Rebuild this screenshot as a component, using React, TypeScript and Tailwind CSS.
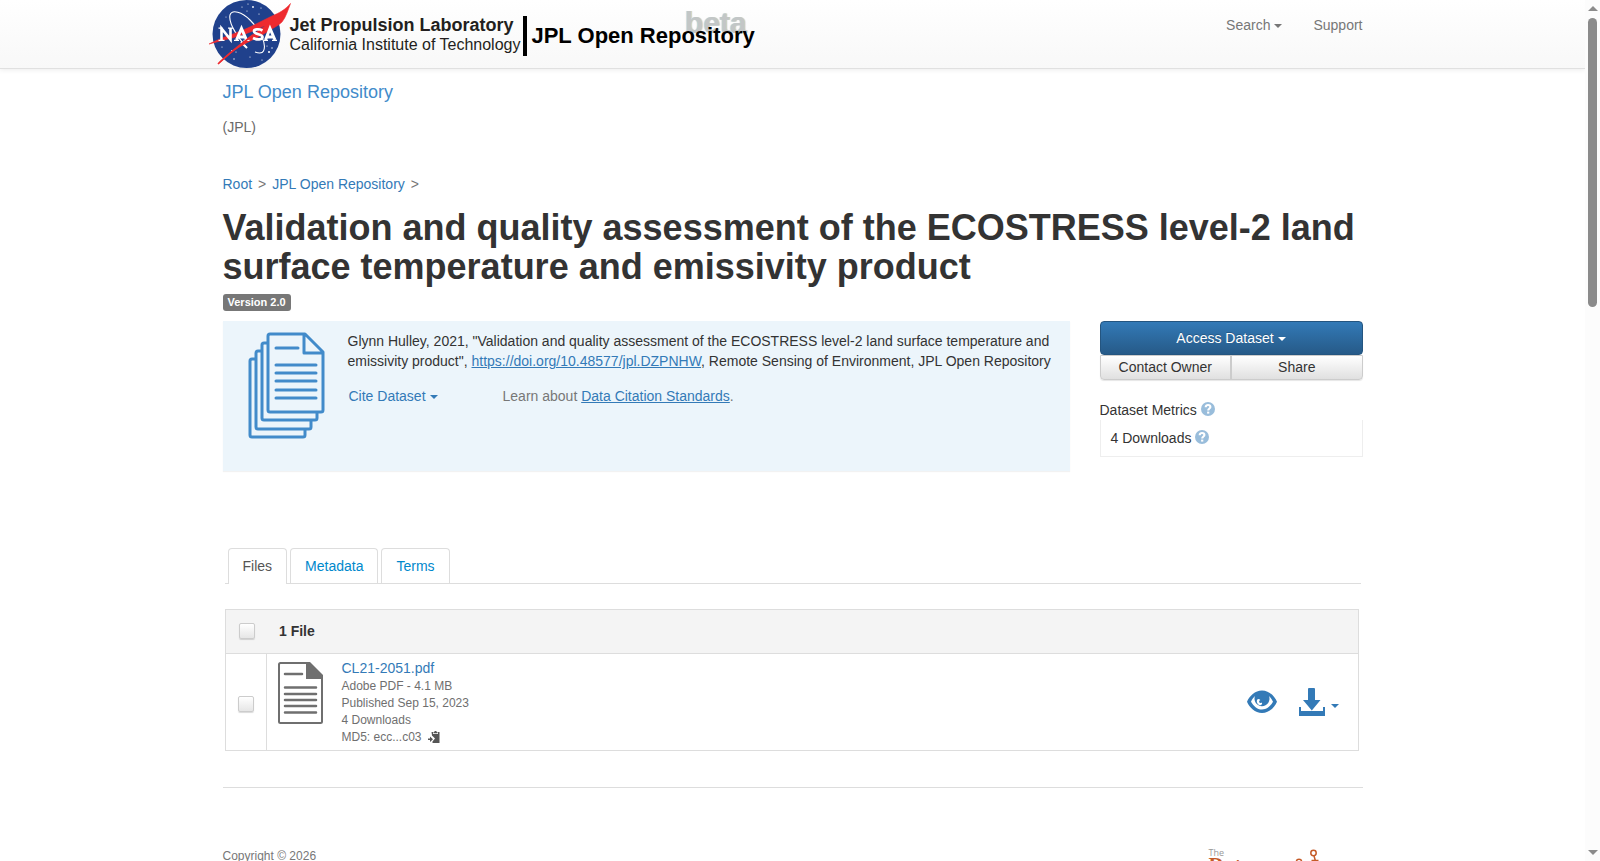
import type { ReactNode } from "react";

function Caret() {
  return (
    <span
      aria-hidden="true"
      className="ml-1 inline-block border-x-4 border-t-4 border-x-transparent border-t-current align-middle"
    />
  );
}

function NasaLogo() {
  return (
    <svg width="84" height="69" viewBox="0 0 84 69" aria-label="NASA" role="img" className="shrink-0">
      <circle cx="38.500" cy="34" r="34" fill="#20418c" />
      <g fill="#fff">
        <circle cx="34" cy="7" r="0.600" />
        <circle cx="40" cy="4" r="0.600" />
        <circle cx="45" cy="7" r="0.900" />
        <circle cx="53" cy="8" r="0.600" />
        <circle cx="39" cy="11" r="0.600" />
        <circle cx="51" cy="14" r="0.600" />
        <circle cx="18" cy="17" r="0.500" />
        <circle cx="24" cy="51" r="1" />
        <circle cx="28" cy="52" r="0.600" />
        <circle cx="26" cy="59" r="0.700" />
        <circle cx="42" cy="57" r="0.600" />
        <circle cx="54" cy="60" r="0.600" />
        <circle cx="61" cy="52" r="1" />
        <circle cx="64" cy="48" r="0.700" />
        <circle cx="59" cy="46" r="0.600" />
        <circle cx="14" cy="47" r="0.600" />
      </g>
      <path
        d="M39 48C32 40 20 24 22 15C24 9 34 12 42 20C52 30 59 44 55.500 51C54 54 50 53 47 52"
        fill="none"
        stroke="#fff"
        strokeWidth="1.100"
      />
      <path d="M33 42l6 6" stroke="#fff" strokeWidth="2" />
      <path
        d="M82.500 3.500C77 10 71 13 64 16C58 19 52 22 46 25C38 29 28 33 22 35C14 38 7 41 1 44C9 42 16 40 24 38C32 36 40 33 47.500 30C52 28 55 26 57 26C50 31 40 38 32 45C24 51 16 58 10 64C15 60 20 55 26 50.500C38 42 50 38 59 32C65 28 70 26 74 22C78 17 80 10 82.500 3.500Z"
        fill="#ee2a2f"
        stroke="#ee2a2f"
        strokeWidth="0.600"
      />
      <g fill="none" stroke="#fff" strokeWidth="3">
        <path d="M13.500 40V28.500l9 11V28" strokeWidth="2.600" />
        <path d="M28.500 40l5-11.500 5 11.500M30 37h7" />
        <path d="M54.500 30.500c-3.500-2-8.500-1.500-8.500 0.800 0 3.500 8.500 2.500 8.500 5.700 0 3-5.500 3-9.500 1" strokeWidth="2.700" />
        <path d="M57.500 40l4.500-11.500 5 11.500M59 37h6" />
      </g>
      <path d="M10.500 40.300h6M10.500 28.200h4M20 28.200h5M26 40.300h5M35.500 40.300h6M55.500 40.300h4.500M64 40.300h5" stroke="#fff" strokeWidth="1.200" />
      <path d="M10 64C20 54 32 45 45 35" stroke="#ee2a2f" strokeWidth="1.600" fill="none" />
    </svg>
  );
}

function Header() {
  return (
    <header className="h-[69px] border-b border-[#e0e0e0] bg-linear-to-b from-white to-[#f8f8f8] shadow-[0_1px_5px_rgba(0,0,0,0.08)]">
      <div className="mx-auto flex w-[1140px] max-w-full items-start justify-between">
        <a href="#" className="-ml-[15px] flex items-start text-black">
          <NasaLogo />
          <span className="-ml-0.5 mt-[15px] flex flex-col whitespace-nowrap text-[#231f20]">
            <span className="text-[18px]/[20px] font-bold">Jet Propulsion Laboratory</span>
            <span className="text-[16px]/[20px]">California Institute of Technology</span>
          </span>
          <span className="ml-[3px] mt-4 h-10 w-1 bg-black" />
          <span className="relative ml-1 mt-6 whitespace-nowrap text-[22px]/[24px] font-bold">
            <span className="absolute -top-[18px] right-2 text-[30px]/[34px] text-[#c3c6c6] [text-shadow:-1px_0_#c0dcea,1px_0_#eedfc4]">
              beta
            </span>
            <span className="relative">JPL Open Repository</span>
          </span>
        </a>
        <nav className="mt-[15px] flex gap-[31px] text-[#777]">
          <button type="button">
            Search
            <Caret />
          </button>
          <a href="#">Support</a>
        </nav>
      </div>
    </header>
  );
}

function DatasetIcon() {
  return (
    <svg
      width="78"
      height="108"
      viewBox="0 -1 78 108"
      fill="none"
      stroke="#428bca"
      strokeWidth="3"
      strokeLinejoin="round"
      className="shrink-0"
    >
      <path d="M8 27H4a2 2 0 0 0-2 2v74a2 2 0 0 0 2 2h51a2 2 0 0 0 2-2v-6" />
      <path d="M14 19h-4a2 2 0 0 0-2 2v74a2 2 0 0 0 2 2h51a2 2 0 0 0 2-2v-6" />
      <path d="M20 11h-4a2 2 0 0 0-2 2v73a2 2 0 0 0 2 2h51a2 2 0 0 0 2-2v-6" />
      <path d="M57 2H22a2 2 0 0 0-2 2v74a2 2 0 0 0 2 2h51a2 2 0 0 0 2-2V20z M56 2v19h19" />
      <path d="M28 16h22M28 33h40M28 41h40M28 49h40M28 58h40M28 66h40" strokeLinecap="round" />
    </svg>
  );
}

function FileIcon() {
  return (
    <svg width="46" height="62" viewBox="0 0 46 62" fill="none" stroke="#6f6f6f" strokeWidth="2">
      <path d="M29 1H2.500A1.500 1.500 0 0 0 1 2.500v57A1.500 1.500 0 0 0 2.500 61h40a1.500 1.500 0 0 0 1.500-1.500V14" />
      <path d="M28 0h4l13 13v4H28z" fill="#6f6f6f" stroke="none" />
      <path d="M7 12h17M7 25.500h31M7 32h31M7 38h31M7 44h31M7 50.500h31" strokeWidth="2.500" strokeLinecap="round" />
    </svg>
  );
}

function EyeIcon() {
  return (
    <svg width="30" height="24" viewBox="0 0 30 24">
      <path
        fill="#337ab7"
        fillRule="evenodd"
        d="M15 0.500C22 0.500 27.500 6 30 11.700 27.500 17.500 22 23 15 23S2.500 17.500 0 11.700C2.500 6 8 0.500 15 0.500ZM4 11.700C6.500 16 10 19.500 15 19.500s8.500-3.500 11-7.800C25 9.500 23.500 7.500 22 6A7.500 7.500 0 1 1 8 6C6.500 7.500 5 9.500 4 11.700Z"
      />
      <path d="M10 10c1-2 3-1 4 1s2 3 0 4-5-2-4-5Z" fill="#fff" />
      <circle cx="13.600" cy="11.600" r="1.500" fill="#337ab7" />
    </svg>
  );
}

function DownloadIcon() {
  return (
    <svg width="26" height="28" viewBox="0 0 26 28" fill="#337ab7">
      <path d="M9 1q0-1 1-1h5q1 0 1 1v11h5.500L12.800 22.500 4 12h5zM0 19h2v4h22V19h2v9H0z" />
    </svg>
  );
}

function CopyIcon() {
  return (
    <svg width="12" height="12" viewBox="0 0 12 12" fill="#555" className="ml-1.5 inline-block align-[-2px]">
      <path d="M3.500 1H5V3h5V1h1.500v11H4.500V10.500l2.500-3L4 4.500z" />
      <path d="M5.500 2.300V1h1V0h2v1h1v1.300zM4.500 3.700h6.500v1H4.500z" />
      <path d="M0 7.500h2V5.500L5 8.300 2 11V9H0z" />
    </svg>
  );
}

function Help() {
  return (
    <svg width="14" height="14" viewBox="0 0 14 14" className="ml-1 inline-block align-[-1px]">
      <circle cx="7" cy="7" r="7" fill="#99bddb" />
      <path d="M4.700 5.300C4.700 3.600 5.700 3 7 3s2.400 0.700 2.400 2C9.400 6.600 7.200 6.500 7.200 8.600" fill="none" stroke="#fff" strokeWidth="2.100" />
      <path d="M6.100 9.600h2.200v2H6.100z" fill="#fff" />
    </svg>
  );
}

function Check({ label }: { label: string }) {
  return (
    <input
      type="checkbox"
      aria-label={label}
      className="block size-4 appearance-none rounded-[2px] border border-[#ccc] bg-linear-to-b from-white to-[#e6e6e6] shadow-[0_1px_1px_rgba(0,0,0,0.15)]"
    />
  );
}

function Tab({ active, children }: { active?: boolean; children: ReactNode }) {
  return (
    <button
      type="button"
      role="tab"
      aria-selected={!!active}
      className={
        active
          ? "-mb-px h-9 rounded-t border border-b-0 border-[#ddd] bg-white px-3.5 pb-0.5 text-[#555]"
          : "h-[35px] rounded-t border border-b-0 border-[#ddd] px-3.5 text-[#0088cc]"
      }
    >
      {children}
    </button>
  );
}

function Citation() {
  return (
    <section className="flex h-[150px] min-w-0 flex-1 bg-[#ecf5fb] pl-[25px] pt-[10px] shadow-[0_1px_1px_rgba(0,0,0,0.05)]">
      <DatasetIcon />
      <div className="ml-[22px] min-w-0 flex-1 pr-4 text-[#333]">
        <p>
          Glynn Hulley, 2021, "Validation and quality assessment of the ECOSTRESS level-2 land surface temperature and
          emissivity product",{" "}
          <a href="#" className="text-[#337ab7] underline">
            https://doi.org/10.48577/jpl.DZPNHW
          </a>
          , Remote Sensing of Environment, JPL Open Repository
        </p>
        <div className="mt-[15px] flex gap-[65px] pl-px text-[#777]">
          <button type="button" className="text-[#337ab7]">
            Cite Dataset
            <Caret />
          </button>
          <p>
            Learn about{" "}
            <a href="#" className="text-[#337ab7] underline">
              Data Citation Standards
            </a>
            .
          </p>
        </div>
      </div>
    </section>
  );
}

function Actions() {
  return (
    <aside className="w-[263px] shrink-0 text-[#333]">
      <button
        type="button"
        className="block h-[34px] w-full rounded border border-[#245580] bg-linear-to-b from-[#337ab7] to-[#265a88] text-white [text-shadow:0_-1px_0_rgba(0,0,0,0.2)]"
      >
        Access Dataset
        <Caret />
      </button>
      <div className="flex h-[25px] overflow-hidden rounded-b border border-[#ccc] bg-linear-to-b from-white to-[#e0e0e0] shadow-[0_1px_1px_rgba(0,0,0,0.1)]">
        <button type="button" className="flex-1 border-r-2 border-[#ccc] pb-0.5">
          Contact Owner
        </button>
        <button type="button" className="flex-1 pb-0.5">
          Share
        </button>
      </div>
      <h2 className="mt-5">
        Dataset Metrics
        <Help />
      </h2>
      <p className="border border-t-0 border-[#eee] px-2.5 pb-2 pt-2">
        4 Downloads
        <Help />
      </p>
    </aside>
  );
}

function Files() {
  return (
    <table className="mx-0.5 mt-[25px] w-[1134px] max-w-full border-collapse border border-[#ddd] text-left">
      <thead>
        <tr className="h-11 border-b border-[#ddd] bg-[#f4f4f4]">
          <th className="w-[41px] pb-0.5 pl-[13px]">
            <Check label="Select all files" />
          </th>
          <th colSpan={2} className="pb-0.5 pl-[13px] font-bold text-[#333]">
            1 File
          </th>
        </tr>
      </thead>
      <tbody>
        <tr className="h-[97px]">
          <td className="w-[41px] border-r border-[#ddd] pl-3 pt-1">
            <Check label="Select CL21-2051.pdf" />
          </td>
          <td className="pl-[11px] align-top">
            <div className="flex pt-1">
              <span className="pt-1">
                <FileIcon />
              </span>
              <div className="ml-[18px] text-[12px]/[17px] text-[#6f6f6f]">
                <a href="#" className="block text-[14px]/[20px] text-[#337ab7]">
                  CL21-2051.pdf
                </a>
                <p>Adobe PDF - 4.1 MB</p>
                <p>Published Sep 15, 2023</p>
                <p>4 Downloads</p>
                <p>
                  MD5: ecc...c03
                  <button type="button" aria-label="Copy checksum">
                    <CopyIcon />
                  </button>
                </p>
              </div>
            </div>
          </td>
          <td className="pr-[19px]">
            <div className="flex items-center justify-end text-[#337ab7]">
              <button type="button" aria-label="Preview">
                <EyeIcon />
              </button>
              <button type="button" aria-label="Download" className="ml-[22px] flex items-center">
                <DownloadIcon />
                <span className="ml-0.5 mt-2 flex">
                  <Caret />
                </span>
              </button>
            </div>
          </td>
        </tr>
      </tbody>
    </table>
  );
}

function DataverseLogo() {
  return (
    <div className="flex w-[154px] items-start">
      <div className="w-[86px] shrink-0">
        <p className="font-['Open_Sans',sans-serif] text-[9px]/[10px] text-[#999]">The</p>
        <p className="-mt-1 font-['Liberation_Serif',serif] text-[21px]/[22px] font-bold text-[#c55b28]">Dataverse</p>
      </div>
      <svg width="26" height="30" viewBox="0 0 26 30" fill="none" stroke="#c55b28" strokeWidth="1.500">
        <circle cx="18.500" cy="5" r="2.700" />
        <circle cx="4" cy="14" r="2.700" />
        <path d="M19 8l1.500 5M16.500 12.500h7" />
      </svg>
    </div>
  );
}

function Scrollbar() {
  return (
    <div aria-hidden="true" className="flex w-[15px] shrink-0 flex-col items-center bg-[#fcfcfc] pb-1.5 pt-1.5">
      <span className="border-x-[5px] border-b-[5px] border-x-transparent border-b-[#8b8b8b]" />
      <span className="mt-[7px] h-[289px] w-[9px] rounded-full bg-[#8b8b8b]" />
      <span className="mt-auto border-x-[5px] border-t-[5px] border-x-transparent border-t-[#8b8b8b]" />
    </div>
  );
}

export default function App() {
  return (
    <div className="flex h-screen overflow-hidden bg-white font-['Liberation_Sans',Arial,sans-serif] text-[14px]/[20px] text-[#333]">
      <div className="min-w-0 flex-1 overflow-hidden">
        <Header />
        <main className="mx-auto w-[1140px] max-w-full">
          <a href="#" className="mt-[11px] block text-[18px]/[24px] text-[#428bca]">
            JPL Open Repository
          </a>
          <p className="mt-[13px] text-[#6a6a6a]">(JPL)</p>
          <nav className="mt-[37px] flex gap-1.5 text-[#777]">
            <a href="#" className="text-[#337ab7]">
              Root
            </a>
            <span>&gt;</span>
            <a href="#" className="text-[#337ab7]">
              JPL Open Repository
            </a>
            <span>&gt;</span>
          </nav>
          <h1 className="mt-[14px] text-[36px]/[39px] font-bold">
            Validation and quality assessment of the ECOSTRESS level-2 land surface temperature and emissivity product
          </h1>
          <span className="mt-2 block w-fit rounded-[3px] bg-[#777] px-[5px] text-[11px]/[17px] font-bold text-white">
            Version 2.0
          </span>
          <div className="mt-2.5 flex items-start gap-[30px]">
            <Citation />
            <Actions />
          </div>
          <div role="tablist" className="mx-0.5 mt-[77px] flex items-end gap-[3px] border-b border-[#ddd] pl-[3px]">
            <Tab active>Files</Tab>
            <Tab>Metadata</Tab>
            <Tab>Terms</Tab>
          </div>
          <Files />
          <hr className="mt-9 border-[#ddd]" />
          <footer className="mt-[60px] flex justify-between text-[12px]/[17px] text-[#777]">
            <p>Copyright © 2026</p>
            <DataverseLogo />
          </footer>
        </main>
      </div>
      <Scrollbar />
    </div>
  );
}
